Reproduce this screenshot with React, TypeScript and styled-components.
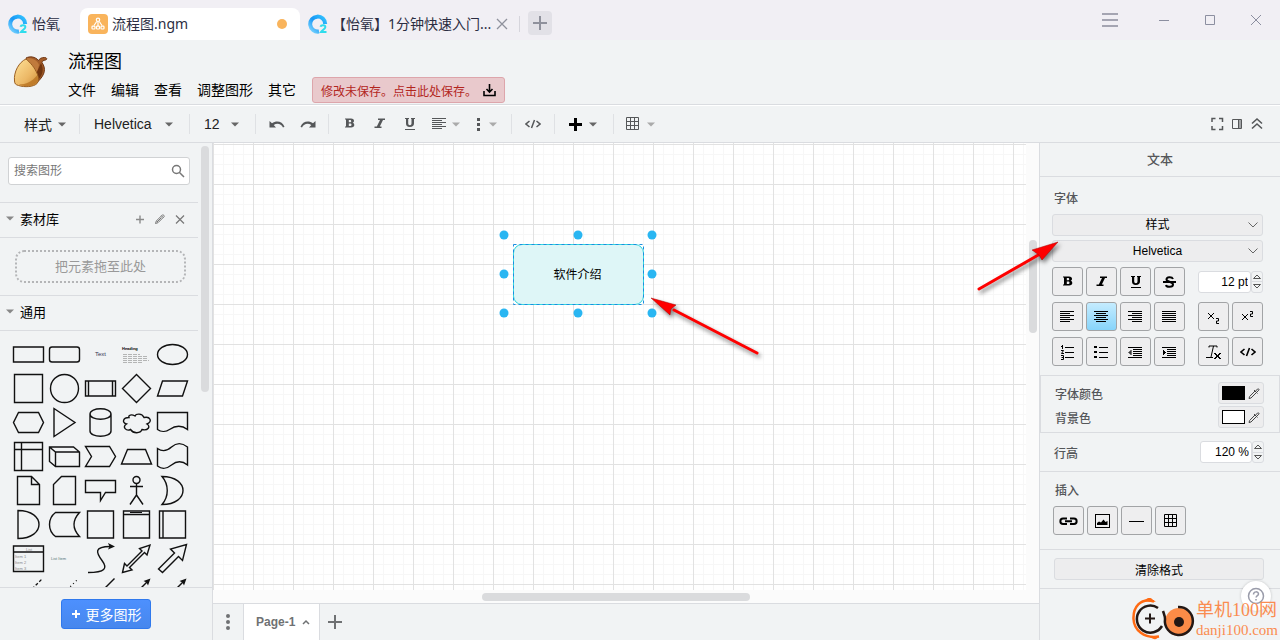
import React from "react";
import styled, { createGlobalStyle, css } from "styled-components";

const SANS = `"Liberation Sans", "Noto Sans CJK SC", sans-serif`;
const HUMANIST = `"Noto Sans", "Noto Sans CJK SC", sans-serif`;
const LINE = "#dadce0";
const PANEL = "#f1f3f4";

const GlobalStyle = createGlobalStyle`
  * { box-sizing: border-box; }
  body { margin: 0; font-family: ${SANS}; font-size: 12px; color: #000; }
  button, input, select { font: inherit; color: inherit; }
  button { padding: 0; border: 0; background: none; cursor: pointer; }
  svg { display: block; flex: none; }
`;

const Shell = styled.div`
  position: relative;
  display: flex;
  flex-direction: column;
  height: 100vh;
  overflow: hidden;
  background: ${PANEL};
`;

/* ---------- window tabs ---------- */

const TabBar = styled.header`
  display: flex;
  align-items: flex-end;
  height: 40px;
  flex: none;
  background: #f1eff4;
  font: 14px/20px ${HUMANIST};
  color: #2b2d42;
`;

const Tab = styled.div<{ $active?: boolean; $width: number }>`
  display: flex;
  align-items: center;
  gap: 4px;
  width: ${(p) => p.$width}px;
  height: 32px;
  padding: 0 10px 0 8px;
  border-radius: 8px 8px 0 0;
  background: ${(p) => (p.$active ? "#fff" : "none")};
  white-space: nowrap;
`;

const TabTitle = styled.span`
  flex: 1;
  min-width: 0;
`;

const DirtyDot = styled.i`
  width: 10px;
  height: 10px;
  margin-right: 3px;
  border-radius: 50%;
  background: #f9b45c;
`;

const TabDivider = styled.i`
  width: 1px;
  height: 16px;
  margin: 0 8px 8px 0;
  background: #d6d5dc;
`;

const NewTab = styled.button`
  display: grid;
  place-items: center;
  width: 24px;
  height: 24px;
  margin-bottom: 5px;
  border-radius: 4px;
  background: #e2e1e7;
`;

const WindowButtons = styled.div`
  display: flex;
  align-items: center;
  height: 40px;
  margin-left: auto;
  padding-right: 16px;
  gap: 30px;
`;

const WindowButton = styled.button<{ $wide?: boolean }>`
  display: grid;
  place-items: center;
  width: ${(p) => (p.$wide ? 32 : 16)}px;
  height: 40px;
`;

/* ---------- document header ---------- */

const DocHeader = styled.div`
  display: flex;
  height: 65px;
  flex: none;
  padding-left: 12px;
  border-bottom: 1px solid ${LINE};
`;

const DocLogo = styled.div`
  width: 56px;
  padding-top: 15px;
`;

const DocInfo = styled.div`
  display: flex;
  flex-direction: column;
  gap: 2px;
  padding-top: 10px;
`;

const DocTitle = styled.h1`
  margin: 0;
  font: 18px/25px ${SANS};
`;

const MenuBar = styled.nav`
  display: flex;
  align-items: center;
  gap: 15px;
  font-size: 14px;
`;

const MenuLink = styled.a`
  color: inherit;
  line-height: 20px;
  text-decoration: none;
`;

const SaveNotice = styled.button`
  display: flex;
  align-items: center;
  gap: 6px;
  height: 26px;
  margin-left: 1px;
  padding: 0 8px;
  border: 1px solid #dda5ab;
  border-radius: 3px;
  background: #e9c9cc;
  color: #b3261e;
  font-size: 12px;
`;

/* ---------- toolbar ---------- */

const Toolbar = styled.div`
  display: flex;
  align-items: center;
  height: 38px;
  flex: none;
  padding: 0 15px 0 12px;
  border-top: 1px solid #fff;
  border-bottom: 1px solid ${LINE};
  color: #555759;
`;

const ToolGroup = styled.div<{ $width: number; $gap?: number; $pad?: number }>`
  display: flex;
  align-items: center;
  gap: ${(p) => p.$gap ?? 0}px;
  width: ${(p) => p.$width}px;
  height: 20px;
  padding-left: ${(p) => p.$pad ?? 12}px;
  border-right: 1px solid #dfe1e4;

  &:last-of-type { border-right: 0; }
`;

const ToolButton = styled.button`
  display: flex;
  align-items: center;
  gap: 6px;
  height: 20px;
`;

const ToolText = styled.span`
  font-size: 14px;
  color: #222;
`;

const ToolSelectWrap = styled.label<{ $width: number }>`
  display: flex;
  align-items: center;
  justify-content: space-between;
  width: ${(p) => p.$width}px;
`;

const ToolSelect = styled.select`
  flex: 1;
  min-width: 0;
  padding: 0;
  border: 0;
  background: none;
  appearance: none;
  color: #222;
  font-size: 14px;
`;

const ToolbarEnd = styled.section`
  display: flex;
  gap: 4px;
  margin-left: auto;
`;

/* ---------- main area ---------- */

const Main = styled.main`
  display: flex;
  flex: 1;
  min-height: 0;
`;

const Sidebar = styled.aside`
  display: flex;
  flex-direction: column;
  width: 213px;
  flex: none;
  border-right: 1px solid ${LINE};
`;

const SidebarScroll = styled.div`
  display: flex;
  flex: 1;
  min-height: 0;
  overflow: hidden;
`;

const SidebarContent = styled.div`
  width: 198px;
`;

const Thumb = styled.i<{ $w: number; $h: number; $top?: number; $left?: number }>`
  display: block;
  flex: none;
  width: ${(p) => p.$w}px;
  height: ${(p) => p.$h}px;
  margin: ${(p) => p.$top ?? 0}px 0 0 ${(p) => p.$left ?? 0}px;
  border-radius: 4px;
  background: #dadbdd;
`;

const SearchArea = styled.div`
  padding: 14px 8px 17px;
  border-bottom: 1px solid ${LINE};
`;

const SearchBox = styled.label`
  display: flex;
  align-items: center;
  height: 28px;
  padding: 0 3px 0 5px;
  border: 1px solid #d0d2d4;
  border-radius: 3px;
  background: #fff;
`;

const SearchInput = styled.input`
  flex: 1;
  min-width: 0;
  padding: 0;
  border: 0;
  outline: 0;
  background: none;
  &::placeholder { color: #777; opacity: 1; }
`;

const SectionHead = styled.div`
  display: flex;
  align-items: center;
  gap: 6px;
  height: 35px;
  padding: 0 11px 3px 6px;
  border-bottom: 1px solid ${LINE};
  font-size: 13px;
`;

const SectionTitle = styled.span`
  flex: 1;
`;

const SectionAction = styled.button`
  display: grid;
  place-items: center;
  width: 14px;
  height: 14px;
`;

const DropArea = styled.div`
  padding: 12px 12px 12px 15px;
  border-bottom: 1px solid ${LINE};
`;

const DropHint = styled.div`
  height: 33px;
  border: 2px dotted #b4b5b7;
  border-radius: 9px;
  color: #999;
  font-size: 13px;
  line-height: 30px;
  text-align: center;
`;

const Palette = styled.div`
  display: grid;
  grid-template-columns: repeat(5, 36px);
  grid-auto-rows: 34px;
  padding: 6px 0 0 10px;
`;

const ShapeButton = styled.button`
  display: block;
`;

const SidebarFooter = styled.div`
  display: flex;
  justify-content: center;
  height: 53px;
  padding-top: 11px;
  border-top: 1px solid ${LINE};
`;

const MoreShapes = styled.button`
  display: flex;
  align-items: center;
  justify-content: center;
  gap: 5px;
  width: 90px;
  height: 30px;
  border: 1px solid #3079ed;
  border-radius: 3px;
  background: linear-gradient(#4d90fe, #4787ed);
  color: #fff;
  font-size: 14px;
`;

const Workspace = styled.section`
  display: flex;
  flex: 1;
  flex-direction: column;
  min-width: 0;
`;

const CanvasFrame = styled.div`
  display: grid;
  grid-template: minmax(0, 1fr) 13px / minmax(0, 1fr) 13px;
  flex: 1;
  min-height: 0;
  background: #fbfbfb;
`;

const Canvas = styled.div`
  position: relative;
  overflow: hidden;
  background-color: #fff;
  background-image: linear-gradient(90deg, #e2e2e2 1px, transparent 1px),
    linear-gradient(#e2e2e2 1px, transparent 1px),
    linear-gradient(90deg, #f7f7f7 1px, transparent 1px),
    linear-gradient(#f7f7f7 1px, transparent 1px);
  background-size: 40px 40px, 40px 40px, 10px 10px, 10px 10px;
  background-position: 0 1px;
`;

const Node = styled.div`
  position: absolute;
  left: 300px;
  top: 101px;
  display: grid;
  place-items: center;
  width: 131px;
  height: 61px;
  padding: 0 2px 2px 0;
  border: 1px solid #33d6dd;
  border-radius: 9px;
  background: #def6f7;
`;

const Selection = styled.svg`
  position: absolute;
  left: 280px;
  top: 81px;
`;

const PageBar = styled.footer`
  display: flex;
  height: 37px;
  flex: none;
  border-top: 1px solid ${LINE};
  color: #6f7173;
`;

const PageBarButton = styled.button`
  display: grid;
  place-items: center;
  width: 30px;
`;

const PageTab = styled.button`
  display: flex;
  align-items: center;
  gap: 7px;
  width: 77px;
  padding-left: 12px;
  border: solid ${LINE};
  border-width: 0 1px;
  background: #fff;
  font-weight: 700;
`;

/* ---------- format panel ---------- */

const FormatPanel = styled.aside`
  width: 241px;
  flex: none;
  border-left: 1px solid ${LINE};
  color: #55575a;
`;

const PanelTitle = styled.h2`
  height: 34px;
  margin: 0;
  border-bottom: 1px solid ${LINE};
  font: 500 13px/34px ${SANS};
  text-align: center;
`;

const PanelSection = styled.section<{ $pad: string; $boxed?: boolean }>`
  padding: ${(p) => p.$pad};
  border: solid ${LINE};
  border-width: ${(p) => (p.$boxed ? "0 1px 1px" : "0 0 1px")};
`;

const Label = styled.div`
  margin-bottom: 7px;
  padding-left: 2px;
  font-weight: 500;
  line-height: 16px;
`;

const SelectWrap = styled.div`
  display: grid;
  align-items: center;
  margin-bottom: 4px;

  > * { grid-area: 1 / 1; }
  > svg { justify-self: end; margin-right: 5px; pointer-events: none; }
`;

const controlBox = css`
  height: 22px;
  border: 1px solid ${LINE};
  border-radius: 3px;
  background: #ededee;
  color: #000;
`;

const PanelSelect = styled.select`
  ${controlBox}
  width: 100%;
  padding: 0;
  appearance: none;
  text-align: center;
  text-align-last: center;
`;

const WideButton = styled.button`
  ${controlBox}
  width: 100%;
`;

const ButtonRow = styled.div`
  display: flex;
  align-items: center;
  gap: 3px;
  margin-top: 6px;

  ${SelectWrap} + & { margin-top: 5px; }
`;

const Push = styled.span`
  flex: 1;
`;

const SquareButton = styled.button<{ $on?: boolean }>`
  display: grid;
  place-items: center;
  width: 31px;
  height: 29px;
  border: 1px solid #a2a4a6;
  border-radius: 3px;
  background: ${(p) => (p.$on ? "linear-gradient(#c5ecff, #87d4fa)" : "#eeeeef")};
  color: #000;
`;

const Row = styled.label`
  display: flex;
  align-items: center;
  justify-content: space-between;
  height: 24px;
  font-weight: 500;
`;

const Stepper = styled.span`
  display: flex;
`;

const StepInput = styled.input<{ $width: number }>`
  width: ${(p) => p.$width}px;
  height: 22px;
  padding: 0 2px;
  border: 1px solid ${LINE};
  border-radius: 3px;
  background: #fff;
  color: #000;
  text-align: right;
`;

const StepButtons = styled.span`
  display: flex;
  flex-direction: column;
  width: 12px;
  height: 22px;
  border: 1px solid ${LINE};
  border-radius: 3px;
`;

const StepButton = styled.button`
  display: grid;
  place-items: center;
  flex: 1;

  & + & { border-top: 1px solid ${LINE}; }
`;

const ColorButton = styled.button`
  ${controlBox}
  display: flex;
  align-items: center;
  gap: 2px;
  width: 46px;
  padding-left: 3px;
`;

const Swatch = styled.i<{ $color: string }>`
  width: 23px;
  height: 14px;
  border: 1px solid #000;
  background: ${(p) => p.$color};
`;

/* ---------- overlays ---------- */

const Help = styled.button`
  position: absolute;
  right: 9px;
  bottom: 29px;
  display: grid;
  place-items: center;
  width: 30px;
  height: 30px;
  border-radius: 50%;
  background: #fff;
  box-shadow: 0 0 3px rgba(0, 0, 0, 0.2);
`;

const Brand = styled.div`
  position: absolute;
  right: 2px;
  bottom: 0;
  display: flex;
  align-items: center;
`;

const BrandText = styled.div`
  color: #fa8c50;
  font-family: "Liberation Serif", "Noto Sans CJK SC", serif;
  font-size: 15px;
  line-height: 18px;
  white-space: nowrap;
`;

const BrandName = styled.div`
  font-size: 18px;
  line-height: 22px;
`;

const Pointer = styled.svg<{ $x: number; $y: number }>`
  position: absolute;
  left: ${(p) => p.$x}px;
  top: ${(p) => p.$y}px;
  filter: drop-shadow(2px 3px 2px rgba(0, 0, 0, 0.5));
  pointer-events: none;
`;

/* ---------- icons ---------- */

type IconProps = {
  w?: number;
  h?: number;
  d: string;
  sw?: number;
  fill?: boolean;
  color?: string;
};

const Icon = ({ w = 16, h = 16, d, sw = 1, fill, color = "currentColor" }: IconProps) => (
  <svg width={w} height={h} viewBox={`0 0 ${w} ${h}`} aria-hidden="true">
    <path d={d} fill={fill ? color : "none"} fillRule="evenodd" stroke={fill ? "none" : color} strokeWidth={sw} />
  </svg>
);

const Caret = ({ color = "#666" }: { color?: string }) => (
  <Icon w={8} h={5} fill color={color} d="M0 .5h8L4 4.500z" />
);

const lines = (xs: [number, number][], y0: number, step: number) =>
  xs.map(([a, b], i) => `M${a} ${y0 + i * step}H${b}`).join("");

const ICON = {
  left: lines([[0, 14], [0, 10], [0, 14], [0, 10], [0, 14], [0, 10]], 2.5, 2),
  center: lines([[0, 14], [2, 12], [0, 14], [2, 12], [0, 14], [2, 12]], 2.5, 2),
  right: lines([[0, 14], [4, 14], [0, 14], [4, 14], [0, 14], [4, 14]], 2.5, 2),
  full: lines([[0, 14], [0, 14], [0, 14], [0, 14], [0, 14], [0, 14]], 2.5, 2),
  bold: "M3 2.500h6C11.200 2.500 12 3.500 12 4.800c0 1-.5 1.700-1.400 2 1.100.3 1.700 1.100 1.700 2.300 0 1.600-1.100 2.400-3.200 2.400H3v-1h1v-7H3zM6.800 4V6.300h1.200c.8 0 1.200-.4 1.200-1.150S8.800 4 8 4zM6.800 7.600v2.400h1.400c.8 0 1.300-.4 1.300-1.200s-.5-1.200-1.300-1.200z",
  italic: "M6 2.500h7v1.400h-2L7.800 10.600H9.500V12H2.500v-1.400h2.300L8 3.900H6z",
  under: "M3 2h4v1H6.200v4.300c0 1.200.6 1.900 1.700 1.900s1.600-.7 1.600-1.900V3H9V2h4v1h-1v4.500C12 9.700 10.500 11 7.800 11S4 9.700 4 7.500V3H3zM3 13h10v1H3z",
  code: "M4.500 5L1 8l3.500 3M11.500 5L15 8l-3.500 3M9.500 4l-3 8",
  grid: "M1.500 1.500h12v12h-12zM1.500 5.500h12M1.500 9.500h12M5.500 1.500v12M9.500 1.500v12",
  undo: "M.5 5v6.500h6.500L4.700 9C8 7 12 7.500 14 11.500L15.500 10.800C13.500 5.300 7.500 4.300 3 7.200z",
  redo: "M15.500 5v6.500h-6.500L11.300 9C8 7 4 7.500 2 11.500L.5 10.800C2.500 5.300 8.500 4.300 13 7.200z",
  pipette: "M2 12.500l.6-2L8 5l1.500 1.500-5.500 5.500zM7 4l3.500 3.500M8.500 5.200L10.500 3c.8-.8 2 .4 1.300 1.200L9.700 6.300",
  pencil: "M1.500 10.500l.8-2.500L8.500 1.800c.5-.5 2.200 1.200 1.700 1.700L4 9.700zM7.500 2.800l1.700 1.700M3 9l4.500-4.500",
};

const BubbleLogo = ({ id }: { id: string }) => (
  <svg width="20" height="20" viewBox="0 0 20 20" aria-hidden="true">
    <defs>
      <linearGradient id={id} x1="0" y1="1" x2="1" y2="0">
        <stop offset="0" stopColor="#7fd6ff" />
        <stop offset=".5" stopColor="#1797f5" />
        <stop offset="1" stopColor="#35c4ff" />
      </linearGradient>
    </defs>
    <path d="M11 17.500A7.500 7.500 0 1 1 17.200 10" fill="none" stroke={`url(#${id})`} strokeWidth="4" />
    <path d="M12.500 12.800c.5-2.200 5.300-2.200 4.800.6-.3 1.700-3.300 3-4.300 4.600h5.500" fill="none" stroke="#2fdcec" strokeWidth="2" />
  </svg>
);

const DiagramLogo = () => (
  <svg width="20" height="20" viewBox="0 0 20 20" aria-hidden="true">
    <rect width="20" height="20" rx="4" fill="#f9b45c" />
    <g fill="none" stroke="#fff" strokeWidth="1.200">
      <circle cx="10" cy="5.800" r="1.700" />
      <path d="M10 7.500v4.500M8.700 7.500L6 11.500M11.300 7.500l2.700 4" />
      <rect x="4" y="12.200" width="3" height="2.800" rx=".8" />
      <rect x="8.500" y="12.200" width="3" height="2.800" rx=".8" />
      <rect x="13" y="12.200" width="3" height="2.800" rx=".8" />
    </g>
  </svg>
);

const Acorn = () => (
  <svg width="37" height="36" viewBox="0 0 37 36" aria-hidden="true">
    <defs>
      <linearGradient id="nut" x1="0" y1="0" x2="1" y2="1">
        <stop offset="0" stopColor="#ffe39a" />
        <stop offset=".6" stopColor="#ecb866" />
        <stop offset="1" stopColor="#c98a35" />
      </linearGradient>
    </defs>
    <path d="M14 3c4-2 9-1.500 12.500 2.500 1-2 3-3 6-3 2.500 0 3 2 1 2.500-2 .4-3.500 1-3.500 2.500 4 6 3.500 12-4.500 19.500z" fill="#a35d29" stroke="#6e3512" />
    <path d="M16 3c5 0 10 3 11 7l-2 8C22 12 18 7 14 4z" fill="#c07a3c" />
    <path d="M29 8c3 6 2 12-3 17l-2-6z" fill="#70350f" />
    <path d="M14 4C7 7 1.500 17 2.500 26c.3 3 1 3.500 4 4.500 6 2 15 1.500 18.500-2 2-2 1.500-6 .5-9C22.500 12 18.500 8 14 4z" fill="url(#nut)" stroke="#9a5f22" />
    <path d="M7 29.500c7 0 13-3 18-9 1.500 4 1 6-1 8-4 3-12 3.500-17 1z" fill="#b97322" opacity=".8" />
  </svg>
);

/* ---------- shape palette ---------- */

type Shape = { name: string; d?: string; head?: string; art?: React.ReactNode };

const SHAPES: Shape[] = [
  { name: "矩形", d: "M3.500 10h30v15h-30z" },
  { name: "圆角矩形", d: "M6 10h25q2.500 0 2.500 2.500v10q0 2.500-2.500 2.500H6q-2.500 0-2.500-2.500v-10Q3.500 10 6 10z" },
  { name: "文本", art: <text x="13" y="19" fontSize="6" fill="#335">Text</text> },
  {
    name: "文本框",
    art: (
      <>
        <text x="4" y="13" fontSize="4" fontWeight="700">Heading</text>
        <path d="M5 17.500h17M5 19.500h25M5 21.500h24M5 23.500h26M5 25.500h20" stroke="#999" strokeWidth=".7" strokeDasharray="4 1" />
      </>
    ),
  },
  { name: "椭圆", d: "M3.500 17.500a15 10 0 1 0 30 0a15 10 0 1 0-30 0z" },
  { name: "正方形", d: "M4.500 3.500h28v28h-28z" },
  { name: "圆", d: "M4.500 17.500a14 14 0 1 0 28 0a14 14 0 1 0-28 0z" },
  { name: "过程", d: "M3.500 10h30v15h-30zM6.500 10v15M30.500 10v15" },
  { name: "菱形", d: "M18.500 3.500l14 14-14 14-14-14z" },
  { name: "平行四边形", d: "M8.500 10h25l-5 15h-25z" },
  { name: "六边形", d: "M8.500 7.500h20l5 10-5 10h-20l-5-10z" },
  { name: "三角形", d: "M8 3.500l21 14-21 14z" },
  { name: "圆柱", d: "M8 9v17c0 7 21 7 21 0V9M8 9c0-7 21-7 21 0s-21 7-21 0z" },
  { name: "云", d: "M11 12.500c-6 0-7.500 5-2.500 6.500-5 3 0 7.500 4 5.500 3 4.500 10 4 11.500 0 6 1.500 9-3 5-5.500 6-2.500 3-8-3-6.500-2-4.500-8-4-9-1.500-3.500-2-7-1-6 1.500z" },
  { name: "文档", d: "M3.500 7.500h30v17c-8-6-15-2-18 0s-8 3-12 0z" },
  { name: "内部存储", d: "M4.500 3.500h28v28h-28zM11.500 3.500v28M4.500 10.500h28" },
  { name: "立方体", d: "M3.500 8h24l6 5v14.500h-24l-6-5zM3.500 8l6 5h24M9.500 13v14.500" },
  { name: "步骤", d: "M3.500 7.500h24l6 10-6 10h-24l6-10z" },
  { name: "梯形", d: "M9.500 10.500h18l6 14.500h-30z" },
  { name: "带状", d: "M3.500 9.500c5 3.500 9 3 14-1.500s11-4 16 0v18c-5-4-11-4-16 0s-9 5-14 1z" },
  { name: "便签", d: "M7.500 3.500h14l8 8v20h-22zM21.500 3.500v8h8" },
  { name: "卡片", d: "M15.500 3.500h14v28h-22v-20z" },
  { name: "标注", d: "M3.500 7.500h30v12h-10l-5 8v-8h-15z" },
  { name: "角色", d: "M15 7a3.500 3.500 0 1 0 7 0a3.500 3.500 0 1 0-7 0zM18.500 10.500V22M12 13.500h13M18.500 22L12 31.500M18.500 22L25 31.500" },
  { name: "或", d: "M8 3.500c28 0 28 28 0 28 7-8 7-20 0-28z" },
  { name: "与", d: "M8 3.500c28 0 28 28 0 28z" },
  { name: "数据存储", d: "M9.500 5.500h24q-11 12 0 24h-24c-8-6-8-18 0-24z" },
  { name: "容器", d: "M5.500 4h26v27h-26z" },
  { name: "水平容器", d: "M5.500 4h26v27h-26zM5.500 7.500h26", head: "M12 5h12v1H12z" },
  { name: "垂直容器", d: "M5.500 4h26v27h-26zM9 4v27" },
  {
    name: "列表",
    d: "M3.500 5h30v25.500h-30zM3.500 11h30",
    art: (
      <g fontSize="4" fill="#888">
        <text x="16" y="9.500">List</text>
        <text x="5" y="16.500">Item 1</text>
        <text x="5" y="22.500">Item 2</text>
        <text x="5" y="28.500">Item 3</text>
      </g>
    ),
  },
  { name: "列表项", art: <text x="5" y="19" fontSize="4" fill="#577">List Item</text> },
  { name: "曲线", d: "M6 31.500c17 0 20-4 14-12s-8-14 8-14", head: "M26 2l7 3.500-7 3 1.500-3z" },
  { name: "双向箭头", d: "M4.500 31.500l2-9 2.500 2.500 15-15-2.500-2.500 10.500-3.500-3 10-2.500-2.500-15 15 2.500 2.500z" },
  { name: "箭头", d: "M4.500 28l16-16-4-4 16-4.500-4 16-4-4-16 16z" },
  { name: "虚线", art: <path d="M4.500 31.500l28-28" stroke="#111" strokeWidth="1.300" strokeDasharray="3 2" /> },
  { name: "点线", art: <path d="M4.500 31.500l28-28" stroke="#111" strokeWidth="1.300" strokeDasharray="1 3" /> },
  { name: "直线", d: "M4.500 31.500l28-28" },
  { name: "双向连线", d: "M5 31L30 6", head: "M25.500 6l7-2.500-2.500 7-1.500-3z" },
  { name: "单向连线", d: "M5 31L30 6", head: "M25.500 6l7-2.500-2.500 7-1.500-3z" },
];

const ShapeArt = ({ shape }: { shape: Shape }) => (
  <svg width="36" height="34" viewBox="0 0 36 34" aria-hidden="true">
    {shape.d && <path d={shape.d} fill="none" stroke="#111" strokeWidth="1.400" />}
    {shape.head && <path d={shape.head} fill="#111" />}
    {shape.art}
  </svg>
);

const HANDLES = [
  [11, 11], [85, 11], [159, 11],
  [11, 50], [159, 50],
  [11, 89], [85, 89], [159, 89],
];

const Steps = () => (
  <StepButtons>
    <StepButton aria-label="增加"><Icon w={8} h={5} color="#555" d="M.5 4.500L4 1l3.500 3.500z" /></StepButton>
    <StepButton aria-label="减少"><Icon w={8} h={5} color="#555" d="M.5.500L4 4 7.500.500z" /></StepButton>
  </StepButtons>
);

const Glyph = ({ label, on, ...icon }: IconProps & { label: string; on?: boolean }) => (
  <SquareButton aria-label={label} $on={on}><Icon {...icon} /></SquareButton>
);

export default function App() {
  return (
    <Shell>
      <GlobalStyle />
      <TabBar>
        <Tab $width={80}><BubbleLogo id="bubble-a" /><TabTitle>怡氧</TabTitle></Tab>
        <Tab $width={220} $active><DiagramLogo /><TabTitle>流程图.ngm</TabTitle><DirtyDot /></Tab>
        <Tab $width={219}>
          <BubbleLogo id="bubble-b" />
          <TabTitle>【怡氧】1分钟快速入门...</TabTitle>
          <Icon w={14} h={14} color="#8f919c" sw={1.3} d="M2 2l10 10M12 2L2 12" />
        </Tab>
        <TabDivider />
        <NewTab aria-label="新建标签"><Icon color="#8f919c" sw={2} d="M8 1v14M1 8h14" /></NewTab>
        <WindowButtons>
          <WindowButton $wide aria-label="菜单"><Icon color="#a5a5b2" sw={2} d="M0 2h16M0 8h16M0 14h16" /></WindowButton>
          <WindowButton aria-label="最小化"><Icon color="#8c8fa0" d="M3 8.500h10" /></WindowButton>
          <WindowButton aria-label="最大化"><Icon color="#8c8fa0" d="M3.500 3.500h9v9h-9z" /></WindowButton>
          <WindowButton aria-label="关闭"><Icon color="#8c8fa0" d="M3 3l10 10M13 3L3 13" /></WindowButton>
        </WindowButtons>
      </TabBar>

      <DocHeader>
        <DocLogo><Acorn /></DocLogo>
        <DocInfo>
          <DocTitle>流程图</DocTitle>
          <MenuBar>
            {["文件", "编辑", "查看", "调整图形", "其它"].map((m) => (
              <MenuLink key={m} href="#">{m}</MenuLink>
            ))}
            <SaveNotice>
              修改未保存。点击此处保存。
              <Icon color="#000" w={13} h={14} sw={1.600} d="M6.500 1v8M3.500 6l3 3 3-3M1 8v4.500h11V8" />
            </SaveNotice>
          </MenuBar>
        </DocInfo>
      </DocHeader>

      <Toolbar>
        <ToolGroup $width={68}>
          <ToolButton><ToolText>样式</ToolText><Caret /></ToolButton>
        </ToolGroup>
        <ToolGroup $width={110} $pad={14}>
          <ToolSelectWrap $width={79}>
            <ToolSelect aria-label="字体"><option>Helvetica</option></ToolSelect><Caret />
          </ToolSelectWrap>
        </ToolGroup>
        <ToolGroup $width={66} $pad={14}>
          <ToolSelectWrap $width={35}>
            <ToolSelect aria-label="字号"><option>12</option></ToolSelect><Caret />
          </ToolSelectWrap>
        </ToolGroup>
        <ToolGroup $width={73} $pad={13} $gap={15}>
          <ToolButton aria-label="撤销"><Icon fill d={ICON.undo} /></ToolButton>
          <ToolButton aria-label="重做"><Icon fill d={ICON.redo} /></ToolButton>
        </ToolGroup>
        <ToolGroup $width={183} $pad={13} $gap={14}>
          <ToolButton aria-label="粗体"><Icon fill d={ICON.bold} /></ToolButton>
          <ToolButton aria-label="斜体"><Icon fill d={ICON.italic} /></ToolButton>
          <ToolButton aria-label="下划线"><Icon fill d={ICON.under} /></ToolButton>
          <ToolButton aria-label="对齐"><Icon w={14} d={ICON.left} /><Caret color="#aaa" /></ToolButton>
          <ToolButton aria-label="更多">
            <Icon w={9} fill d="M3 2h3v3H3zM3 7h3v3H3zM3 12h3v3H3z" /><Caret color="#aaa" />
          </ToolButton>
        </ToolGroup>
        <ToolGroup $width={43} $pad={13}>
          <ToolButton aria-label="代码"><Icon sw={1.500} d={ICON.code} /></ToolButton>
        </ToolGroup>
        <ToolGroup $width={59}>
          <ToolButton aria-label="插入"><Icon color="#000" sw={3} d="M8.500 2v13M2 8.500h13" /><Caret /></ToolButton>
        </ToolGroup>
        <ToolGroup $width={60} $pad={11}>
          <ToolButton aria-label="表格"><Icon d={ICON.grid} /><Caret color="#aaa" /></ToolButton>
        </ToolGroup>
        <ToolbarEnd>
          <ToolButton aria-label="全屏"><Icon sw={1.500} d="M3 6V2.500h3.500M10 2.500h3.500V6M13.500 10v3.500H10M6.500 13.500H3V10" /></ToolButton>
          <ToolButton aria-label="面板"><Icon d="M3.500 3.500h9v9h-9zM9.500 3.500v9M11 4v8" /></ToolButton>
          <ToolButton aria-label="收起"><Icon sw={1.600} d="M3 7.500L8 3l5 4.500M3 12.500L8 8l5 4.500" /></ToolButton>
        </ToolbarEnd>
      </Toolbar>

      <Main>
        <Sidebar>
          <SidebarScroll>
            <SidebarContent>
              <SearchArea>
                <SearchBox>
                  <SearchInput placeholder="搜索图形" aria-label="搜索图形" />
                  <Icon color="#777" sw={1.500} d="M2.500 6.500a4 4 0 1 0 8 0a4 4 0 1 0-8 0zM9.500 9.500l4.500 4.500" />
                </SearchBox>
              </SearchArea>
              <SectionHead>
                <Caret color="#888" />
                <SectionTitle>素材库</SectionTitle>
                <SectionAction aria-label="添加"><Icon w={12} h={12} sw={1.400} color="#8a8a8a" d="M6 2.500v8M2 6.500h8" /></SectionAction>
                <SectionAction aria-label="编辑"><Icon w={12} h={12} color="#777" d={ICON.pencil} /></SectionAction>
                <SectionAction aria-label="关闭"><Icon w={12} h={12} color="#777" sw={1.200} d="M2 2.500l8 8M10 2.500l-8 8" /></SectionAction>
              </SectionHead>
              <DropArea><DropHint>把元素拖至此处</DropHint></DropArea>
              <SectionHead><Caret color="#888" /><SectionTitle>通用</SectionTitle></SectionHead>
              <Palette>
                {SHAPES.map((s) => (
                  <ShapeButton key={s.name} aria-label={s.name}><ShapeArt shape={s} /></ShapeButton>
                ))}
              </Palette>
            </SidebarContent>
            <Thumb $w={8} $h={246} $top={3} $left={3} />
          </SidebarScroll>
          <SidebarFooter>
            <MoreShapes><Icon w={10} h={10} sw={2} d="M5 1v8M1 5h8" />更多图形</MoreShapes>
          </SidebarFooter>
        </Sidebar>

        <Workspace>
          <CanvasFrame>
            <Canvas>
              <Node>软件介绍</Node>
              <Selection width="170" height="100" viewBox="0 0 170 100">
                <rect x="20.500" y="20.500" width="130" height="60" fill="none" stroke="#1a8fe0" strokeDasharray="3 3" />
                {HANDLES.map(([x, y]) => (
                  <circle key={`${x}-${y}`} cx={x} cy={y} r="4.500" fill="#29b6f2" />
                ))}
              </Selection>
            </Canvas>
            <Thumb $w={8} $h={93} $top={97} $left={3} />
            <Thumb $w={268} $h={8} $top={3} $left={269} />
          </CanvasFrame>
          <PageBar>
            <PageBarButton aria-label="页面菜单">
              <Icon fill d="M6 2a2 2 0 1 0 4 0a2 2 0 1 0-4 0zM6 8a2 2 0 1 0 4 0a2 2 0 1 0-4 0zM6 14a2 2 0 1 0 4 0a2 2 0 1 0-4 0z" />
            </PageBarButton>
            <PageTab>Page-1<Icon w={8} h={6} sw={1.500} d="M1 5l3-3 3 3" /></PageTab>
            <PageBarButton aria-label="新建页面"><Icon sw={2} d="M8 1v14M1 8h14" /></PageBarButton>
          </PageBar>
        </Workspace>

        <FormatPanel>
          <PanelTitle>文本</PanelTitle>
          <PanelSection $pad="14px 17px 9px 12px">
            <Label>字体</Label>
            <SelectWrap>
              <PanelSelect aria-label="字体样式"><option>样式</option></PanelSelect>
              <Icon w={10} h={6} color="#666" d="M.5.500L5 5 9.500.500" />
            </SelectWrap>
            <SelectWrap>
              <PanelSelect aria-label="字体名称"><option>Helvetica</option></PanelSelect>
              <Icon w={10} h={6} color="#666" d="M.5.500L5 5 9.500.500" />
            </SelectWrap>
            <ButtonRow>
              <Glyph label="粗体" w={15} fill d={ICON.bold} />
              <Glyph label="斜体" w={15} fill d={ICON.italic} />
              <Glyph label="下划线" w={15} fill d={ICON.under} />
              <Glyph label="删除线" w={15} sw={2} d="M11 5C10 2.500 4.500 2.500 4.500 5.500 4.500 8 11 7.500 11 10.500 11 13.500 4.500 13.500 4 11M1 8h13" />
              <Push />
              <Stepper><StepInput $width={53} defaultValue="12 pt" aria-label="字号" /><Steps /></Stepper>
            </ButtonRow>
            <ButtonRow>
              <Glyph label="左对齐" w={15} d={ICON.left} />
              <Glyph label="居中" w={15} d={ICON.center} on />
              <Glyph label="右对齐" w={15} d={ICON.right} />
              <Glyph label="两端对齐" w={15} d={ICON.full} />
              <Push />
              <Glyph label="下标" d="M2 4l6 6M8 4l-6 6M10 9.500h2.500v2.500H10.500v2.500H13" />
              <Glyph label="上标" d="M2 5l6 6M8 5l-6 6M10 2.500h2.500V5H10.500v2.500H13" />
            </ButtonRow>
            <ButtonRow>
              <Glyph label="编号列表" w={15} d="M5 3.500h9M5 8.500h9M5 13.500h9M2.500 1v4M1 2.500h1.500M1 6.500h2.500l-2 3h2.500M1 11.500h2.500v4H1M1.500 13.500h2" />
              <Glyph label="项目列表" w={15} d="M5 3.500h9M5 8.500h9M5 13.500h9M0 3.500h3M0 2.500h3M0 8.500h3M0 7.500h3M0 13.500h3M0 12.500h3" />
              <Glyph label="减少缩进" w={15} d="M0 3.500h14M5 5.500h9M5 7.500h9M5 9.500h9M5 11.500h9M0 13.500h14M3 6v5M2 7v3M1 8v1" />
              <Glyph label="增加缩进" w={15} d="M0 3.500h14M5 5.500h9M5 7.500h9M5 9.500h9M5 11.500h9M0 13.500h14M1.500 6v5M2.500 7v3M3.500 8v1" />
              <Push />
              <Glyph label="清除" w={17} d="M4 3.500V2h8v1.500M8.500 2L6 13M1 13.500h7M9 9l6 6M15 9l-6 6M10 9l6 6M16 9l-6 6" />
              <Glyph label="代码" sw={1.600} d={ICON.code} />
            </ButtonRow>
          </PanelSection>
          <PanelSection $boxed $pad="5px 15px 3px 14px">
            <Row as="div">字体颜色<ColorButton aria-label="字体颜色"><Swatch $color="#000" /><Icon w={14} h={14} color="#444" d={ICON.pipette} /></ColorButton></Row>
            <Row as="div">背景色<ColorButton aria-label="背景色"><Swatch $color="#fff" /><Icon w={14} h={14} color="#444" d={ICON.pipette} /></ColorButton></Row>
          </PanelSection>
          <PanelSection $pad="7px 16px 7px 14px">
            <Row>行高<Stepper><StepInput $width={52} defaultValue="120 %" /><Steps /></Stepper></Row>
          </PanelSection>
          <PanelSection $pad="11px 16px 14px 13px">
            <Label>插入</Label>
            <ButtonRow>
              <Glyph label="链接" w={19} sw={2} d="M8 5.500H4C.5 5.500.500 11 4 11h4M11 5.500h4c3.500 0 3.500 5.500 0 5.500h-4M6 8.250h7" />
              <Glyph label="图片" w={15} fill d="M0 1h15v14H0zM1 2v12h13V2zM2 12V10l2-1.500 2 1 2.500-3 2 2.500 2-1V12z" />
              <Glyph label="分隔线" w={15} d="M0 8.500h15" />
              <Glyph label="表格" w={15} d={ICON.grid} />
            </ButtonRow>
          </PanelSection>
          <PanelSection $pad="8px 16px 8px 14px">
            <WideButton>清除格式</WideButton>
          </PanelSection>
        </FormatPanel>
      </Main>

      <Help aria-label="帮助">
        <svg width="18" height="18" viewBox="0 0 18 18" fill="none" stroke="#9a9caa" strokeWidth="1.500">
          <circle cx="9" cy="9" r="7.500" />
          <path d="M6.500 7.500c0-3.500 5-3.300 5-.6 0 1.600-2.400 1.800-2.400 3.600M9 12v1.600" />
        </svg>
      </Help>
      <Brand>
        <svg width="64" height="42" viewBox="0 0 64 42" fill="none" aria-hidden="true">
          <path d="M22 3.500C8-1 1 10 1.500 21S12 41 27 38.500" stroke="#ff6a13" strokeWidth="2.500" />
          <path d="M12 3c4-4 7-4 9-1l3 2zM18 39c4 3 7 3 9-1z" fill="#ff6a13" />
          <path d="M26 10A13.500 13.500 0 1 0 30 28" stroke="#231815" strokeWidth="2.500" />
          <path d="M13 20.500h10M18 15.500v10" stroke="#231815" strokeWidth="2" />
          <circle cx="47" cy="24" r="14" fill="#fb8b47" />
          <path d="M31 13c1 3 2 5 2 8a14 14 0 1 0 13-12" stroke="#231815" strokeWidth="2.500" />
          <circle cx="47" cy="24" r="5" fill="#231815" />
        </svg>
        <BrandText><BrandName>单机100网</BrandName>danji100.com</BrandText>
      </Brand>
      <Pointer $x={970} $y={235} width="100" height="65" viewBox="0 0 100 65">
        <path d="M9 54L70 19" stroke="#fe0000" strokeWidth="3" strokeLinecap="round" />
        <path d="M88 7L72 25l-3-5-7-5z" fill="#fe0000" stroke="#a00" strokeWidth=".5" />
      </Pointer>
      <Pointer $x={640} $y={290} width="130" height="75" viewBox="0 0 130 75">
        <path d="M117 63L34 20" stroke="#fe0000" strokeWidth="3" strokeLinecap="round" />
        <path d="M11 8l25 7-5 4-1 6z" fill="#fe0000" stroke="#a00" strokeWidth=".5" />
      </Pointer>
    </Shell>
  );
}
